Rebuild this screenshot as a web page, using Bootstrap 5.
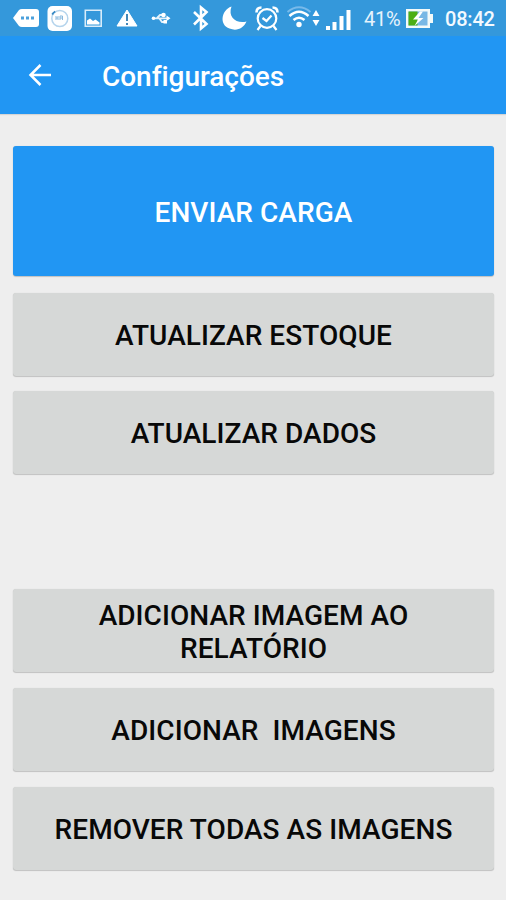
<!DOCTYPE html>
<html lang="pt-BR">
<head>
<meta charset="utf-8">
<meta name="viewport" content="width=device-width, initial-scale=1">
<title>Configurações</title>
<link href="https://cdn.jsdelivr.net/npm/bootstrap@5.3.0/dist/css/bootstrap.min.css" rel="stylesheet">
<style>
body { font-family: Roboto, "Liberation Sans", sans-serif; background: #eee; width: 506px; height: 900px; overflow: hidden; }
.status-bar { height: 36px; background: #3498db; color: #e6f3fc; line-height: 38px; }
.status-bar svg { height: 37px; flex: none; }
.battery-level { font-size: 20px; width: 44px; padding-left: 2px; letter-spacing: -.2px; }
.clock { font-size: 20px; font-weight: 500; padding-left: 11px; color: #f4faff; letter-spacing: -.2px; }
.app-bar { height: 78px; background: #2196f3; box-shadow: 0 1px 1px rgba(0,0,0,.1); padding-left: 28px; }
.app-bar h1 { font-size: 28px; font-weight: 500; margin: 3px 0 0 50px; letter-spacing: -.04px; }
.actions { padding: 32px 12px 0 13px; }
.action { --bs-btn-bg: #d6d8d7; --bs-btn-color: #080808; --bs-btn-hover-bg: #cbcdcc; --bs-btn-border-width: 0; --bs-btn-border-radius: 3px;
  --bs-btn-font-size: 28px; --bs-btn-font-weight: 500; --bs-btn-line-height: 33px; --bs-btn-padding-y: 0;
  height: 83px; margin-bottom: 15px; padding-top: 2px; letter-spacing: .06px; box-shadow: 0 1px 1px rgba(0,0,0,.18), 0 0 1px rgba(0,0,0,.15); }
.action-main { --bs-btn-bg: #2196f3; --bs-btn-color: #fff; --bs-btn-hover-bg: #1e88e5; --bs-btn-hover-color: #fff; height: 130px; margin-bottom: 17px; padding-top: 3px; }
.action-group { margin-top: 100px; }
.action-group .action { margin-bottom: 16px; }
.double-space { white-space: pre; }
</style>
</head>
<body>
<header class="status-bar d-flex">
  <svg width="180" viewBox="0 0 180 37" fill="#fff">
    <path d="M13 18l6-8q1-1 3-1h14q3 0 3 3v12q0 3-3 3H22q-2 0-3-1z"/>
    <path fill="#4ba0dc" d="M21 16.500h3v3h-3zm5 0h3v3h-3zm5 0h3v3h-3z"/>
    <rect x="47.500" y="6" width="24.500" height="25" rx="5"/>
    <circle cx="59.800" cy="18.500" r="8" fill="none" stroke="#b5d4ec" stroke-width="1.500"/>
    <path d="M52.200 14.500q1-2 3-3" fill="none" stroke="#3487c2" stroke-width="1.800"/>
    <path d="M56 16v4m0-2h2m0-2v4m2 0v-4h2.500v4m-2.500-2h2.500" fill="none" stroke="#88b8dd"/>
    <path fill="none" stroke="#d8ecfa" stroke-width="1.600" d="M85.300 10.300h15.900v15.900H85.300z"/>
    <path d="M87 24.500v-4l3-2 3 2.500 2.500-1.500 4 3v2z"/>
    <path d="M127 10l10 16h-20z" stroke="#fff" stroke-linejoin="round"/>
    <path d="M127 14v7m0 2v2" fill="none" stroke="#4187b9" stroke-width="2"/>
    <path d="M152 18.300h17M157 18l3-3h4m-5 3l3 4h4" fill="none" stroke="#e4f2fc" stroke-width="1.800"/>
    <circle cx="153.500" cy="18.300" r="1.800"/><circle cx="163.500" cy="15" r="2.300"/>
    <path d="M163.500 20h3.500v3.500h-3.500zm3-4.500l4 2.800-4 2.800z"/>
  </svg>
  <svg width="182" viewBox="180 0 182 37" fill="none" stroke="#fff" stroke-width="2.200">
    <path stroke-width="2.600" d="M194 12l12.500 12-5.500 4.500V7.500l5.500 4.500L194 24.500"/>
    <path fill="#fff" stroke="none" d="M231.500 6.500c-11 4-12 19-2 22 7 3 14 0 17-7-10 2.500-19-4-15-15z"/>
    <circle cx="267" cy="18.500" r="9.300" stroke-width="2.200"/>
    <path d="M256.500 12.500q0-5 5-5m16 5q0-5-5-5" stroke-width="2.600"/>
    <path d="M260.500 26l-3 4m16-4l3 4m-14-12l4 3 5-5.500" stroke-width="2.200"/>
    <path d="M287.500 12q11.500-9.500 23 0" stroke="#78baea" stroke-width="2"/>
    <path stroke-width="2.600" d="M289.500 16q9.500-8.500 19 0m-15 4q5.500-4.500 11 0"/>
    <circle cx="299" cy="24.500" r="2.700" fill="#fff" stroke="none"/>
    <path fill="#fff" stroke="none" d="M312.500 16l3.500-6 3.500 6zm0 4h7l-3.500 6z"/>
    <path fill="#fff" stroke="none" d="M326 26h4v4h-4zm6.500-4h4v8h-4zm7-6h4v14h-4zm7-6h4v20h-4z"/>
  </svg>
  <span class="battery-level">41%</span>
  <svg width="28" viewBox="406 0 28 37">
    <path fill="#f3faf9" d="M406 9h24v5h3v9h-3v5h-24z"/>
    <path fill="#78b8e5" d="M408.500 11.500h19v14h-19z"/>
    <path fill="#4caf14" d="M408.500 11.500h9v14h-9z"/>
    <path fill="#fff" d="M420 11.500l-7 8h5l-3.500 6.500 9-8h-5l4.500-6.500z"/>
  </svg>
  <span class="clock">08:42</span>
</header>
<nav class="app-bar d-flex align-items-center text-white">
  <svg width="24" height="24" viewBox="0 0 24 24" fill="none" stroke="#fff" stroke-width="2.500"><path d="M23 12H3M12.500 2L2.500 12l10 10"/></svg>
  <h1>Configurações</h1>
</nav>
<main class="actions d-flex flex-column">
  <button class="btn action action-main w-100" type="button">ENVIAR CARGA</button>
  <button class="btn action w-100" type="button">ATUALIZAR ESTOQUE</button>
  <button class="btn action w-100" type="button">ATUALIZAR DADOS</button>
  <section class="action-group d-flex flex-column">
    <button class="btn action w-100" type="button">ADICIONAR IMAGEM AO<br>RELATÓRIO</button>
    <button class="btn action w-100 double-space" type="button">ADICIONAR  IMAGENS</button>
    <button class="btn action w-100" type="button">REMOVER TODAS AS IMAGENS</button>
  </section>
</main>
<script src="https://cdn.jsdelivr.net/npm/bootstrap@5.3.0/dist/js/bootstrap.bundle.min.js"></script>
</body>
</html>
